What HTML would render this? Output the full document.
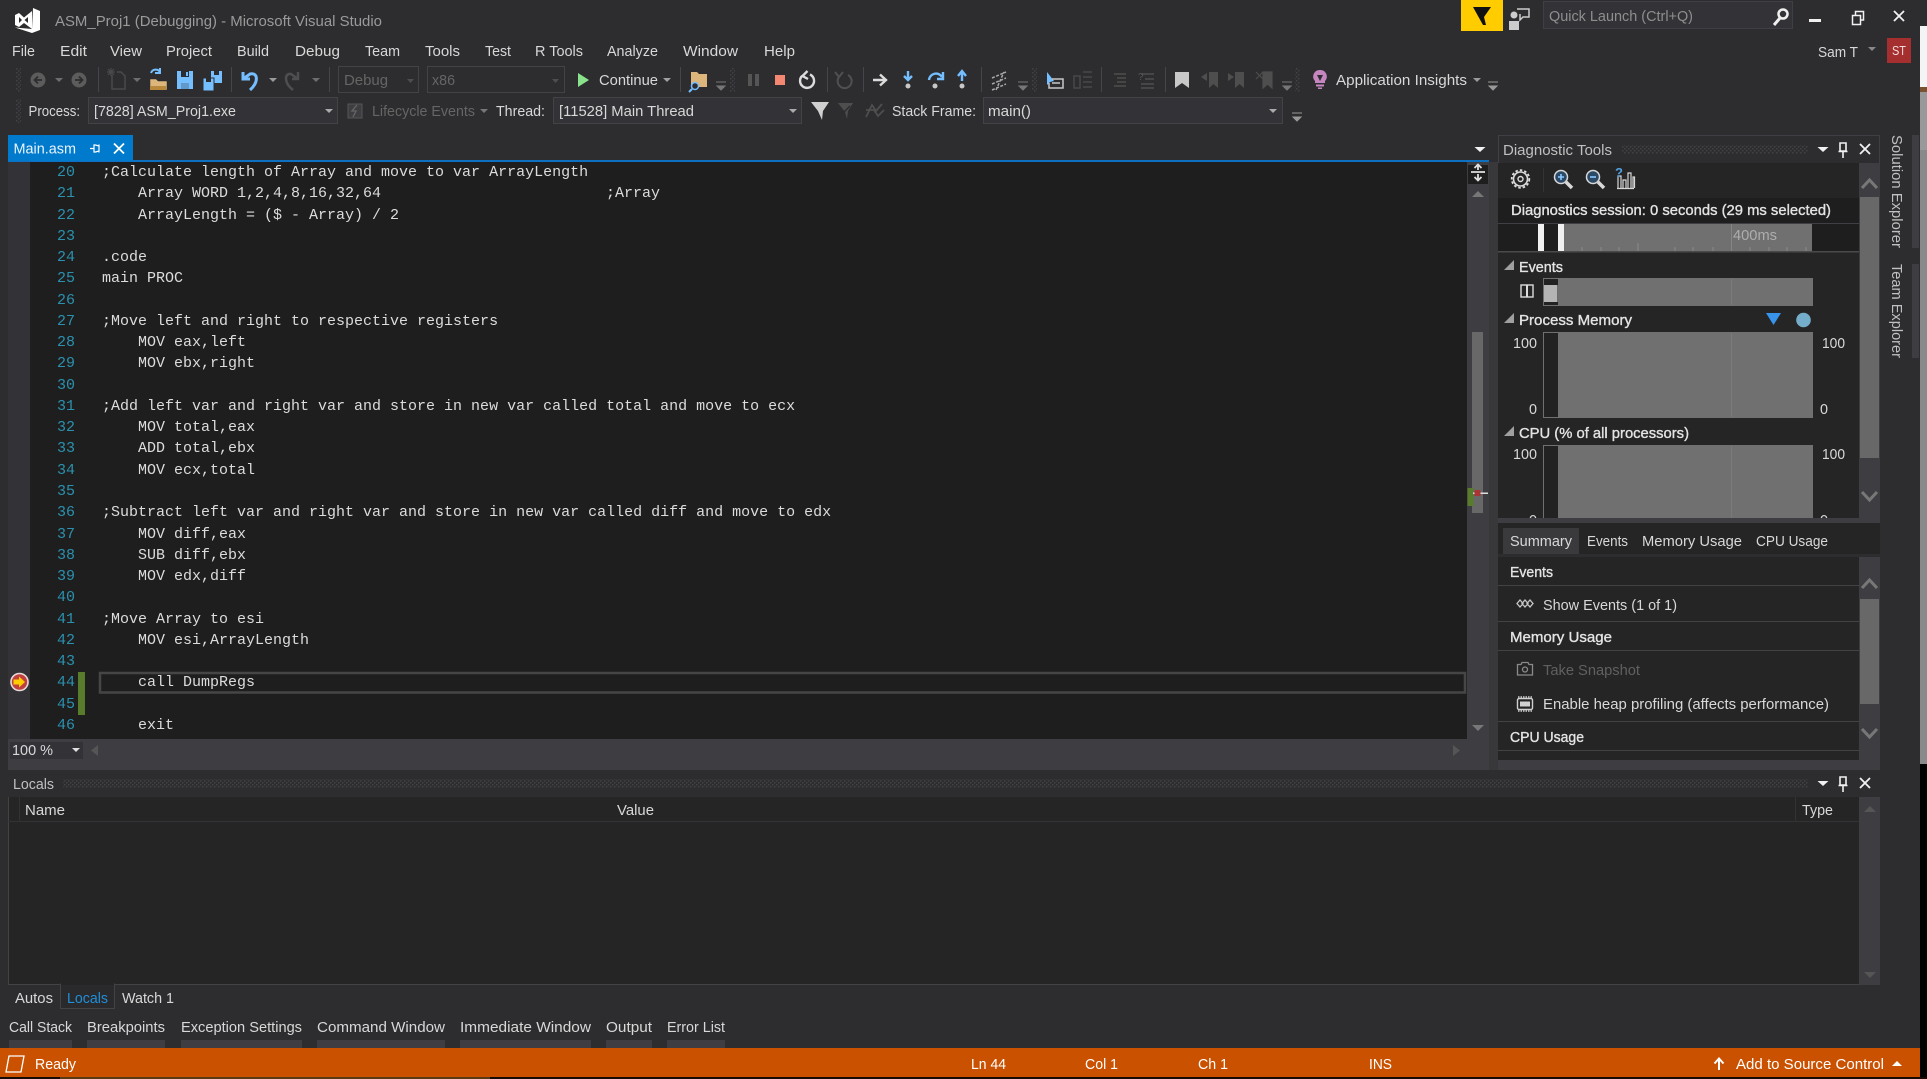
<!DOCTYPE html>
<html><head><meta charset="utf-8"><title>ASM_Proj1 (Debugging) - Microsoft Visual Studio</title>
<style>
html,body{margin:0;padding:0;background:#000;width:1927px;height:1079px;overflow:hidden}
svg{display:block}
text{font-family:"Liberation Sans",sans-serif;font-size:15px;fill:#d8d8d8;white-space:pre}
.c{font-family:"Liberation Mono",monospace;font-size:15px;fill:#dcdcdc}
.n{font-family:"Liberation Mono",monospace;font-size:15px;fill:#2b91af}
.d{fill:#7a7a7a}
.b{fill:#e4e4e4;stroke:#e4e4e4;stroke-width:.35px}
</style></head><body>
<svg width="1927" height="1079" viewBox="0 0 1927 1079" xmlns="http://www.w3.org/2000/svg">
<defs>
<pattern id="g" width="4" height="4" patternUnits="userSpaceOnUse"><rect width="4" height="4" fill="#2d2d30"/><rect width="1.500" height="1.500" fill="#424246"/><rect x="2" y="2" width="1.500" height="1.500" fill="#424246"/></pattern>
<clipPath id="cg"><rect x="1498" y="424" width="361" height="94"/></clipPath>
</defs>
<!-- base -->
<rect width="1927" height="1079" fill="#000"/>
<rect width="1920" height="1079" fill="#2d2d30"/>
<rect x="1920" y="26" width="7" height="61" fill="#f4f4f4"/>
<rect x="1920" y="87" width="7" height="5" fill="#7a5230"/>
<rect x="1920" y="92" width="7" height="58" fill="#999"/>
<rect x="1920" y="150" width="7" height="614" fill="#8a8a8a"/>
<rect x="1920" y="0" width="7" height="26" fill="#2d2d30"/>

<!-- VS logo -->
<path d="M33 8 40 11V30L32 33 15 27.500 32 29Z" fill="#fff"/>
<path d="M15 15 19 13 24 17.500 32 11V29L24 23 19 27 15 25ZM19 17V23L22 20ZM28 17 24.500 20 28 23Z" fill="#fff" fill-rule="evenodd"/>
<text x="55" y="26" textLength="327" lengthAdjust="spacingAndGlyphs" style="fill:#9a9a9a">ASM_Proj1 (Debugging) - Microsoft Visual Studio</text>

<!-- menu -->
<g>
<text x="12" y="56" textLength="23" lengthAdjust="spacingAndGlyphs">File</text>
<text x="60" y="56" textLength="27" lengthAdjust="spacingAndGlyphs">Edit</text>
<text x="110" y="56" textLength="32" lengthAdjust="spacingAndGlyphs">View</text>
<text x="166" y="56" textLength="46" lengthAdjust="spacingAndGlyphs">Project</text>
<text x="237" y="56" textLength="32" lengthAdjust="spacingAndGlyphs">Build</text>
<text x="295" y="56" textLength="45" lengthAdjust="spacingAndGlyphs">Debug</text>
<text x="365" y="56" textLength="35" lengthAdjust="spacingAndGlyphs">Team</text>
<text x="425" y="56" textLength="35" lengthAdjust="spacingAndGlyphs">Tools</text>
<text x="485" y="56" textLength="26" lengthAdjust="spacingAndGlyphs">Test</text>
<text x="535" y="56" textLength="48" lengthAdjust="spacingAndGlyphs">R Tools</text>
<text x="607" y="56" textLength="51" lengthAdjust="spacingAndGlyphs">Analyze</text>
<text x="683" y="56" textLength="55" lengthAdjust="spacingAndGlyphs">Window</text>
<text x="764" y="56" textLength="31" lengthAdjust="spacingAndGlyphs">Help</text>
</g>

<!-- top right -->
<rect x="1461" y="0" width="42" height="31" fill="#ffcc00"/>
<path d="M1473 7H1491L1484 17 1486 25H1483Z" fill="#111"/>
<circle cx="1514" cy="15" r="3.500" fill="#ccc"/>
<path d="M1509 30V21H1519V30Z" fill="#ccc"/>
<path d="M1517 9H1529V17H1523L1520 20V14" fill="none" stroke="#ccc" stroke-width="1.500"/>
<rect x="1543.500" y="1.500" width="249" height="27" fill="#333337" stroke="#3f3f46"/>
<text x="1549" y="21" textLength="144" lengthAdjust="spacingAndGlyphs" style="fill:#8e8e8e">Quick Launch (Ctrl+Q)</text>
<circle cx="1783" cy="14" r="4.500" fill="none" stroke="#f0f0f0" stroke-width="2.500"/>
<path d="M1780 18 1774 25" stroke="#f0f0f0" stroke-width="3"/>
<rect x="1809" y="19" width="12" height="3" fill="#f1f1f1"/>
<path d="M1852.500 15.500H1860.500V24.500H1852.500ZM1855.500 15V11.500H1863.500V20H1861" fill="none" stroke="#f1f1f1" stroke-width="1.500"/>
<path d="M1894 11 1904 21M1904 11 1894 21" stroke="#f1f1f1" stroke-width="1.800"/>
<text x="1818" y="57" textLength="40" lengthAdjust="spacingAndGlyphs">Sam T</text>
<path d="M1868 47H1876L1872 51Z" fill="#888"/>
<rect x="1887" y="38" width="24" height="25" fill="#a52e2e"/>
<text x="1892" y="55" textLength="14" lengthAdjust="spacingAndGlyphs" style="font-size:13px;fill:#f0dcdc">ST</text>

<!-- toolbar 1 -->
<rect x="16" y="68" width="5" height="24" fill="url(#g)"/>
<circle cx="38" cy="80" r="7.500" fill="#5c5c5c"/><path d="M42 80H35M38 76.500 34.500 80 38 83.500" fill="none" stroke="#2d2d30" stroke-width="1.800"/>
<path d="M55 78H63L59 82Z" fill="#6e6e6e"/>
<circle cx="79" cy="80" r="7.500" fill="#5c5c5c"/><path d="M75 80H82M79 76.500 82.500 80 79 83.500" fill="none" stroke="#2d2d30" stroke-width="1.800"/>
<rect x="98" y="67" width="1" height="25" fill="#46464a"/>
<path d="M112 75V89H125V76L121 72H117" fill="none" stroke="#4a4a4a" stroke-width="1.500"/><path d="M111 68V76M107 72H115M108 69 114 75M114 69 108 75" stroke="#4a4a4a" stroke-width="1.200"/>
<path d="M133 78H141L137 82Z" fill="#6e6e6e"/>
<path d="M150 79H156L158 81H167V90H150Z" fill="#dcb67a" stroke="#2d2d30" stroke-width=".5"/><path d="M150 86H166V90H150Z" fill="#b8893c"/>
<path d="M151 73A5 5 0 0 1 160 72M160 68V73H155" fill="none" stroke="#75beff" stroke-width="2"/>
<path d="M177 71H193V89H177Z" fill="#75beff"/><rect x="181" y="71" width="8" height="6" fill="#2d2d30"/><rect x="186" y="72" width="2" height="4" fill="#75beff"/><rect x="181" y="83" width="8" height="6" fill="#2d2d30" opacity=".25"/>
<path d="M211 71H222V83H211Z" fill="#75beff"/><rect x="214" y="71" width="5" height="4" fill="#2d2d30"/>
<path d="M203 78H214V91H203Z" fill="#75beff" stroke="#2d2d30"/><rect x="206" y="78" width="5" height="4" fill="#2d2d30"/>
<rect x="231" y="67" width="1" height="25" fill="#46464a"/>
<path d="M243 72V79H250M243 79 250 74C258 72 259 82 250 90" fill="none" stroke="#75beff" stroke-width="3"/>
<path d="M269 78H277L273 82Z" fill="#9a9a9a"/>
<path d="M298 72V79H292M298 79 291 74C284 73 284 83 293 90" fill="none" stroke="#4e4e4e" stroke-width="2.500"/>
<path d="M312 78H320L316 82Z" fill="#6e6e6e"/>
<rect x="329" y="67" width="1" height="25" fill="#46464a"/>
<rect x="338.500" y="66.500" width="80" height="26" fill="none" stroke="#434346"/>
<text x="344" y="85" textLength="44" lengthAdjust="spacingAndGlyphs" style="fill:#656565">Debug</text>
<path d="M407 79H414L410.500 83Z" fill="#4e4e4e"/>
<rect x="427.500" y="66.500" width="137" height="26" fill="none" stroke="#434346"/>
<text x="432" y="85" textLength="23" lengthAdjust="spacingAndGlyphs" style="fill:#656565">x86</text>
<path d="M552 79H559L555.500 83Z" fill="#4e4e4e"/>
<path d="M578 73 589 80 578 87Z" fill="#8ae28a"/>
<text x="599" y="85" textLength="59" lengthAdjust="spacingAndGlyphs">Continue</text>
<path d="M663 78H671L667 82Z" fill="#a0a0a0"/>
<rect x="680" y="67" width="1" height="25" fill="#46464a"/>
<path d="M691 72H697L699 74H707V87H691Z" fill="#dcb67a"/><circle cx="695" cy="86" r="3.500" fill="#2d2d30" stroke="#75beff" stroke-width="1.500"/><path d="M692 89 689 92" stroke="#75beff" stroke-width="2"/>
<path d="M716 82H726M717 86H725L721 90Z" stroke="#777" fill="#777"/>
<rect x="730" y="68" width="5" height="24" fill="url(#g)"/>
<rect x="748" y="74" width="4" height="12" fill="#555"/><rect x="755" y="74" width="4" height="12" fill="#555"/>
<rect x="775" y="75" width="10" height="10" fill="#f48771"/>
<path d="M802 76A7 7 0 1 0 810 74.500M807.500 71 802.500 76 808 79" fill="none" stroke="#dcdcdc" stroke-width="2.400"/>
<rect x="827" y="67" width="1" height="25" fill="#46464a"/>
<path d="M839 77A7 7 0 1 0 848 75M843 72 839 77 835 72" fill="none" stroke="#505050" stroke-width="2"/>
<rect x="863" y="67" width="1" height="25" fill="#46464a"/>
<path d="M873 80H885M880 74.500 886 80 880 85.500" fill="none" stroke="#dcdcdc" stroke-width="2.400"/>
<path d="M908 71V79M904 76 908 80 912 76" fill="none" stroke="#75beff" stroke-width="2.400"/><circle cx="908" cy="86" r="2.500" fill="#c8c8c8"/>
<path d="M929 80A7 7 0 0 1 942 77M943 72V79H937" fill="none" stroke="#75beff" stroke-width="2.400"/><circle cx="935" cy="86" r="2.500" fill="#c8c8c8"/>
<path d="M962 81V72M958 76 962 71 966 76" fill="none" stroke="#75beff" stroke-width="2.400"/><circle cx="962" cy="86" r="2.500" fill="#c8c8c8"/>
<rect x="981" y="67" width="1" height="25" fill="#46464a"/>
<path d="M992 78 1006 72M992 84 1006 78M992 90 1006 84M996 90 1004 72" stroke="#a8a8a8" stroke-width="1.500" stroke-dasharray="3 1.500" fill="none"/>
<path d="M1018 82H1028M1019 86H1027L1023 90Z" stroke="#777" fill="#777"/>
<rect x="1032" y="68" width="5" height="24" fill="url(#g)"/>
<path d="M1047 72 1047 85 1050 82 1054 81Z" fill="#75beff"/>
<path d="M1052 79H1063V88H1049V83M1052 83H1060" fill="none" stroke="#c8c8c8" stroke-width="1.500"/>
<path d="M1074 76H1080V88H1074ZM1083 72H1092M1083 77H1092M1083 82H1092M1083 87H1092" fill="none" stroke="#484848" stroke-width="1.500"/>
<rect x="1101" y="67" width="1" height="25" fill="#46464a"/>
<path d="M1114 74H1126M1117 78H1126M1117 82H1126M1114 86H1126" stroke="#4e4e4e" stroke-width="1.500"/>
<path d="M1141 74H1154M1145 79H1154M1141 84H1154M1141 88H1154" stroke="#4e4e4e" stroke-width="1.500"/><text x="1138" y="80" style="font-size:10px;fill:#555">?</text>
<rect x="1165" y="67" width="1" height="25" fill="#46464a"/>
<path d="M1175 72H1189V88L1182 83 1175 88Z" fill="#c8c8c8"/>
<path d="M1209 72H1218V88L1213.500 84 1209 88ZM1201 77 1207 73V81Z" fill="#4e4e4e"/>
<path d="M1235 72H1244V88L1239.500 84 1235 88ZM1234 77 1228 73V81Z" fill="#4e4e4e"/>
<path d="M1263 72H1272V88L1267.500 84 1263 88ZM1256 72 1263 79M1263 72 1256 79" fill="#4e4e4e" stroke="#4e4e4e" stroke-width="1.200"/>
<path d="M1282 82H1292M1283 86H1291L1287 90Z" stroke="#777" fill="#777"/>
<rect x="1295" y="68" width="5" height="24" fill="url(#g)"/>
<path d="M1320 70A6.500 6.500 0 0 1 1325 81V83H1315V81A6.500 6.500 0 0 1 1320 70Z" fill="#c586c0"/><path d="M1317 75H1323L1320 81Z" fill="#2d2d30"/><rect x="1316" y="84.500" width="8" height="2" fill="#c586c0"/><rect x="1318" y="87.500" width="4" height="1.500" fill="#c586c0"/>
<text x="1336" y="85" textLength="131" lengthAdjust="spacingAndGlyphs">Application Insights</text>
<path d="M1473 78H1481L1477 82Z" fill="#9a9a9a"/>
<path d="M1488 82H1498M1489 86H1497L1493 90Z" stroke="#999" fill="#999"/>

<!-- toolbar 2 -->
<rect x="16" y="99" width="5" height="24" fill="url(#g)"/>
<text x="28.500" y="116" textLength="51.500" lengthAdjust="spacingAndGlyphs">Process:</text>
<rect x="88.500" y="97.500" width="249" height="26" fill="#333337" stroke="#434346"/>
<text x="94" y="116" textLength="142" lengthAdjust="spacingAndGlyphs">[7828] ASM_Proj1.exe</text>
<path d="M325 109H333L329 113Z" fill="#aaa"/>
<rect x="348" y="104" width="14" height="14" fill="#3e3e42" stroke="#555"/><path d="M357 105 352 111H356L353 117" fill="none" stroke="#666" stroke-width="1.300"/>
<text x="372" y="116" textLength="103" lengthAdjust="spacingAndGlyphs" style="fill:#656565">Lifecycle Events</text>
<path d="M480 109H488L484 113Z" fill="#777"/>
<text x="496" y="116" textLength="49" lengthAdjust="spacingAndGlyphs">Thread:</text>
<rect x="553.500" y="97.500" width="248" height="26" fill="#333337" stroke="#434346"/>
<text x="559" y="116" textLength="135" lengthAdjust="spacingAndGlyphs">[11528] Main Thread</text>
<path d="M789 109H797L793 113Z" fill="#aaa"/>
<path d="M811 102H829L823 111 822 120 818 111Z" fill="#d0d0d0"/>
<path d="M838 103H853L848 111 847 119 845 112Z" fill="#4e4e4e"/><path d="M850 106 842 114" stroke="#2d2d30" stroke-width="1.500"/>
<path d="M866 117 872 105 876 111 882 104M866 110 874 110 878 116 884 110" fill="none" stroke="#4e4e4e" stroke-width="1.800"/>
<text x="892" y="116" textLength="84" lengthAdjust="spacingAndGlyphs">Stack Frame:</text>
<rect x="983.500" y="97.500" width="299" height="26" fill="#333337" stroke="#434346"/>
<text x="988" y="116" textLength="43" lengthAdjust="spacingAndGlyphs">main()</text>
<path d="M1269 109H1277L1273 113Z" fill="#aaa"/>
<path d="M1292 113H1302M1293 117H1301L1297 121Z" stroke="#999" fill="#999"/>

<!-- tab strip -->
<rect x="8" y="160" width="1481" height="2.500" fill="#0e70c0"/>
<rect x="8" y="135" width="125" height="26" fill="#007acc"/>
<text x="13.500" y="153.500" textLength="62.500" lengthAdjust="spacingAndGlyphs" style="fill:#eaf4fb">Main.asm</text>
<path d="M90 148.500H94M94 145V152H95.500L99 151V146L95.500 145ZM99 144.500V152.500" fill="none" stroke="#fff" stroke-width="1.200"/>
<path d="M114 143.500 124 153.500M124 143.500 114 153.500" stroke="#fff" stroke-width="1.800"/>
<path d="M1474.500 147H1485.500L1480 152Z" fill="#f1f1f1"/>

<!-- editor -->
<rect x="8" y="162" width="22" height="577" fill="#333337"/>
<rect x="30" y="162" width="1437" height="577" fill="#1e1e1e"/>
<rect x="78" y="672" width="7" height="43" fill="#587c2c"/>
<rect x="100" y="673" width="1365" height="19.500" fill="none" stroke="#464646" stroke-width="2.500"/>
<g class="ln">
<text class="n" x="57" y="176">20</text><text class="n" x="57" y="197">21</text><text class="n" x="57" y="219">22</text><text class="n" x="57" y="240">23</text><text class="n" x="57" y="261">24</text><text class="n" x="57" y="282">25</text><text class="n" x="57" y="304">26</text><text class="n" x="57" y="325">27</text><text class="n" x="57" y="346">28</text><text class="n" x="57" y="367">29</text><text class="n" x="57" y="389">30</text><text class="n" x="57" y="410">31</text><text class="n" x="57" y="431">32</text><text class="n" x="57" y="452">33</text><text class="n" x="57" y="474">34</text><text class="n" x="57" y="495">35</text><text class="n" x="57" y="516">36</text><text class="n" x="57" y="538">37</text><text class="n" x="57" y="559">38</text><text class="n" x="57" y="580">39</text><text class="n" x="57" y="601">40</text><text class="n" x="57" y="623">41</text><text class="n" x="57" y="644">42</text><text class="n" x="57" y="665">43</text><text class="n" x="57" y="686">44</text><text class="n" x="57" y="708">45</text><text class="n" x="57" y="729">46</text>
</g>
<text class="c" x="102" y="176">;Calculate length of Array and move to var ArrayLength</text>
<text class="c" x="138" y="197">Array WORD 1,2,4,8,16,32,64</text><text class="c" x="606" y="197">;Array</text>
<text class="c" x="138" y="219">ArrayLength = ($ - Array) / 2</text>
<text class="c" x="102" y="261">.code</text>
<text class="c" x="102" y="282">main PROC</text>
<text class="c" x="102" y="325">;Move left and right to respective registers</text>
<text class="c" x="138" y="346">MOV eax,left</text>
<text class="c" x="138" y="367">MOV ebx,right</text>
<text class="c" x="102" y="410">;Add left var and right var and store in new var called total and move to ecx</text>
<text class="c" x="138" y="431">MOV total,eax</text>
<text class="c" x="138" y="452">ADD total,ebx</text>
<text class="c" x="138" y="474">MOV ecx,total</text>
<text class="c" x="102" y="516">;Subtract left var and right var and store in new var called diff and move to edx</text>
<text class="c" x="138" y="538">MOV diff,eax</text>
<text class="c" x="138" y="559">SUB diff,ebx</text>
<text class="c" x="138" y="580">MOV edx,diff</text>
<text class="c" x="102" y="623">;Move Array to esi</text>
<text class="c" x="138" y="644">MOV esi,ArrayLength</text>
<text class="c" x="138" y="686">call DumpRegs</text>
<text class="c" x="138" y="729">exit</text>
<!-- breakpoint -->
<circle cx="19.500" cy="682" r="8.500" fill="#c04040" stroke="#e8d8d8" stroke-width="1.600"/>
<path d="M13.500 679.500H19V676.500L25 682 19 687.500V684.500H13.500Z" fill="#ffcc00"/>

<!-- editor scrollbar -->
<rect x="1467" y="162" width="22" height="577" fill="#3e3e42"/>
<rect x="1468" y="165" width="20" height="19" fill="#1e1e1e"/>
<path d="M1471 172H1485M1478 165V170M1474.500 168 1478 164.500 1481.500 168M1478 174V180M1474.500 177 1478 180.500 1481.500 177" fill="none" stroke="#e0e0e0" stroke-width="1.800"/>
<path d="M1472 197H1484L1478 191Z" fill="#777"/>
<rect x="1472" y="332" width="11" height="181" fill="#686868"/>
<rect x="1467.500" y="488" width="6" height="18" fill="#587c2c"/>
<rect x="1473" y="492.500" width="15" height="1.500" fill="#ddd"/>
<rect x="1474.500" y="490" width="6" height="6" fill="#a33"/>
<path d="M1472 725H1484L1478 731Z" fill="#777"/>
<rect x="1489" y="162" width="9" height="608" fill="#38383b"/>

<!-- zoom bar -->
<rect x="8" y="739" width="1481" height="31" fill="#3e3e42"/>
<rect x="10" y="742" width="73" height="17" fill="#333337"/>
<text x="12" y="755" textLength="41" lengthAdjust="spacingAndGlyphs">100 %</text>
<path d="M72 748H80L76 752Z" fill="#e0e0e0"/>
<path d="M98 745V756L91 750.500Z" fill="#555"/>
<path d="M1453 745V756L1460 750.500Z" fill="#555"/>

<!-- Diagnostic tools -->
<rect x="1498" y="135" width="382" height="635" fill="#2d2d30"/>
<rect x="1498.500" y="135.500" width="381" height="28" fill="none" stroke="#3f3f46"/>
<text x="1503" y="155" textLength="109" lengthAdjust="spacingAndGlyphs" style="fill:#c0c0c0">Diagnostic Tools</text>
<rect x="1622" y="145" width="186" height="9" fill="url(#g)"/>
<path d="M1817.500 147H1828.500L1823 152Z" fill="#f1f1f1"/>
<path d="M1840 143H1846V151H1840ZM1838.500 151.500H1847.500M1843 152V158" fill="none" stroke="#f1f1f1" stroke-width="1.600"/>
<path d="M1860 144 1870 154M1870 144 1860 154" stroke="#f1f1f1" stroke-width="1.800"/>
<rect x="1498" y="163" width="361" height="355" fill="#252526"/>
<circle cx="1520.500" cy="179" r="7" fill="none" stroke="#dcdcdc" stroke-width="1.600"/>
<circle cx="1520.500" cy="179" r="8.800" fill="none" stroke="#dcdcdc" stroke-width="1.800" stroke-dasharray="2.500 2"/>
<circle cx="1520.500" cy="179" r="2.500" fill="none" stroke="#dcdcdc" stroke-width="1.400"/>
<rect x="1543" y="168" width="1" height="24" fill="#333"/>
<circle cx="1561" cy="177" r="6.500" fill="#2b4a68" stroke="#d8d8d8" stroke-width="1.500"/><path d="M1566 182 1572 188" stroke="#d8d8d8" stroke-width="3.500"/><path d="M1558 177H1564M1561 174V180" stroke="#8cc8ff" stroke-width="1.600"/>
<circle cx="1593" cy="177" r="6.500" fill="#2b4a68" stroke="#d8d8d8" stroke-width="1.500"/><path d="M1598 182 1604 188" stroke="#d8d8d8" stroke-width="3.500"/><path d="M1590 177H1596" stroke="#8cc8ff" stroke-width="1.600"/>
<path d="M1618 188V176H1621V188M1623 188V180H1626V188M1628 188V173H1631V188M1633 188V177H1634.500V188M1617 188.500H1634" fill="none" stroke="#d8d8d8" stroke-width="1.200"/>
<text x="1615" y="177" style="font-size:13px;font-weight:bold;fill:#4ea0e0">?</text>

<rect x="1498" y="198" width="361" height="25" fill="#1e1e1e"/>
<text class="b" x="1511" y="215" textLength="320" lengthAdjust="spacingAndGlyphs">Diagnostics session: 0 seconds (29 ms selected)</text>
<rect x="1498" y="223" width="361" height="1" fill="#3f3f46"/>
<rect x="1498" y="224" width="361" height="27" fill="#1e1e1e"/>
<rect x="1564" y="224" width="248" height="27" fill="#707070"/>
<rect x="1538" y="224" width="6" height="27" fill="#f0f0f0"/>
<rect x="1558" y="224" width="6" height="27" fill="#f0f0f0"/>
<rect x="1731" y="224" width="1" height="27" fill="#858585"/>
<text x="1733" y="240" textLength="44" lengthAdjust="spacingAndGlyphs" style="fill:#adadad">400ms</text>
<path d="M1582 251V247M1601 251V247M1619 251V247M1638 251V243M1675 251V247M1693 251V247M1713 251V247M1750 251V247M1769 251V247M1787 251V247M1806 251V247" stroke="#8a8a8a"/>
<rect x="1498" y="251" width="361" height="1.500" fill="#4a4a4c"/>

<path d="M1514 260V270H1504Z" fill="#a0a0a0"/>
<text class="b" x="1519" y="272" textLength="44" lengthAdjust="spacingAndGlyphs">Events</text>
<rect x="1521" y="285" width="12" height="12" fill="none" stroke="#dcdcdc" stroke-width="1.400"/><rect x="1526" y="285" width="2" height="12" fill="#dcdcdc"/>
<rect x="1543" y="278" width="270" height="28" fill="#707070"/>
<rect x="1544" y="279" width="14" height="26" fill="#222"/>
<rect x="1544" y="285" width="13.500" height="17" fill="#b4b4b4"/>
<rect x="1731" y="279" width="1" height="26" fill="#7a7a7a"/>

<path d="M1514 313V323H1504Z" fill="#a0a0a0"/>
<text class="b" x="1519" y="325" textLength="113" lengthAdjust="spacingAndGlyphs">Process Memory</text>
<path d="M1766 313H1781L1773.500 325Z" fill="#3794ea"/>
<circle cx="1803.500" cy="320" r="7.300" fill="#75aeca"/>
<rect x="1543" y="332" width="270" height="86" fill="#707070"/>
<rect x="1544" y="333" width="14" height="84" fill="#222"/>
<rect x="1731" y="333" width="1" height="84" fill="#7a7a7a"/>
<text x="1513" y="348" textLength="24" lengthAdjust="spacingAndGlyphs">100</text>
<text x="1529" y="414" textLength="8" lengthAdjust="spacingAndGlyphs">0</text>
<text x="1822" y="348" textLength="23" lengthAdjust="spacingAndGlyphs">100</text>
<text x="1820" y="414" textLength="8" lengthAdjust="spacingAndGlyphs">0</text>

<path d="M1514 426V436H1504Z" fill="#a0a0a0"/>
<text class="b" x="1519" y="438" textLength="170" lengthAdjust="spacingAndGlyphs">CPU (% of all processors)</text>
<rect x="1543" y="445" width="270" height="73" fill="#707070"/>
<rect x="1544" y="446" width="14" height="72" fill="#222"/>
<rect x="1731" y="446" width="1" height="72" fill="#7a7a7a"/>
<text x="1513" y="459" textLength="24" lengthAdjust="spacingAndGlyphs">100</text>
<text x="1822" y="459" textLength="23" lengthAdjust="spacingAndGlyphs">100</text>
<g clip-path="url(#cg)"><text x="1529" y="525" textLength="8" lengthAdjust="spacingAndGlyphs">0</text><text x="1820" y="525" textLength="8" lengthAdjust="spacingAndGlyphs">0</text></g>

<rect x="1859" y="163" width="21" height="355" fill="#3e3e42"/>
<path d="M1862 188 1869.500 180 1877 188" fill="none" stroke="#777" stroke-width="3"/>
<rect x="1860" y="197" width="19" height="261" fill="#686868"/>
<path d="M1862 492 1869.500 500 1877 492" fill="none" stroke="#777" stroke-width="3"/>
<rect x="1498" y="518" width="382" height="5" fill="#3e3e42"/>

<!-- summary tabs -->
<rect x="1498" y="523" width="382" height="31" fill="#252526"/>
<rect x="1503" y="528" width="76" height="26" fill="#3a3a3d"/>
<text x="1510" y="546" textLength="62" lengthAdjust="spacingAndGlyphs">Summary</text>
<text x="1587" y="546" textLength="41" lengthAdjust="spacingAndGlyphs">Events</text>
<text x="1642" y="546" textLength="100" lengthAdjust="spacingAndGlyphs">Memory Usage</text>
<text x="1756" y="546" textLength="72" lengthAdjust="spacingAndGlyphs">CPU Usage</text>

<rect x="1498" y="557" width="361" height="203" fill="#252526"/>
<text class="b" x="1510" y="577" textLength="43" lengthAdjust="spacingAndGlyphs">Events</text>
<rect x="1498" y="585" width="361" height="1" fill="#434346"/>
<path d="M1517 603.500 1520 600 1523 603.500 1520 607ZM1522 603.500 1525 600 1528 603.500 1525 607ZM1527 603.500 1530 600 1533 603.500 1530 607Z" fill="none" stroke="#c8c8c8" stroke-width="1.300"/>
<text x="1543" y="610" textLength="134" lengthAdjust="spacingAndGlyphs">Show Events (1 of 1)</text>
<rect x="1498" y="621" width="361" height="1" fill="#434346"/>
<text class="b" x="1510" y="642" textLength="102" lengthAdjust="spacingAndGlyphs">Memory Usage</text>
<rect x="1498" y="650" width="361" height="1" fill="#434346"/>
<path d="M1517.500 664.500H1521L1522 662.500H1528L1529 664.500H1532.500V675H1517.500Z" fill="none" stroke="#8a8a8a" stroke-width="1.300"/><circle cx="1525" cy="669.500" r="2.500" fill="none" stroke="#8a8a8a" stroke-width="1.300"/>
<text x="1543" y="675" textLength="97" lengthAdjust="spacingAndGlyphs" style="fill:#606060">Take Snapshot</text>
<rect x="1517.500" y="698.500" width="15" height="11" rx="1.500" fill="none" stroke="#d0d0d0" stroke-width="1.400"/><rect x="1520" y="701.500" width="10" height="5" fill="#d0d0d0"/>
<path d="M1518 697H1532M1518 711H1532" stroke="#d0d0d0" stroke-width="1.500" stroke-dasharray="1.500 1"/>
<text x="1543" y="709" textLength="286" lengthAdjust="spacingAndGlyphs">Enable heap profiling (affects performance)</text>
<rect x="1498" y="721" width="361" height="1" fill="#434346"/>
<text class="b" x="1510" y="742" textLength="74" lengthAdjust="spacingAndGlyphs">CPU Usage</text>
<rect x="1498" y="750" width="361" height="1" fill="#434346"/>
<rect x="1859" y="557" width="21" height="203" fill="#3e3e42"/>
<path d="M1862 588 1869.500 580 1877 588" fill="none" stroke="#777" stroke-width="3"/>
<rect x="1860" y="599" width="19" height="105" fill="#686868"/>
<path d="M1862 729 1869.500 737 1877 729" fill="none" stroke="#777" stroke-width="3"/>
<rect x="1498" y="760" width="382" height="10" fill="#3e3e42"/>

<!-- right vertical tabs -->
<rect x="1912" y="135" width="7" height="113" fill="#3e3e42"/>
<rect x="1912" y="264" width="7" height="94" fill="#3e3e42"/>
<text transform="translate(1892,135) rotate(90)" textLength="113" lengthAdjust="spacingAndGlyphs" style="fill:#c0c0c0">Solution Explorer</text>
<text transform="translate(1892,264) rotate(90)" textLength="94" lengthAdjust="spacingAndGlyphs" style="fill:#c0c0c0">Team Explorer</text>

<!-- locals -->
<rect x="8" y="770" width="1872" height="27" fill="#2d2d30"/>
<text x="13" y="789" textLength="41" lengthAdjust="spacingAndGlyphs" style="fill:#c0c0c0">Locals</text>
<rect x="63" y="779" width="1745" height="9" fill="url(#g)"/>
<path d="M1817.500 781H1828.500L1823 786Z" fill="#f1f1f1"/>
<path d="M1840 777H1846V785H1840ZM1838.500 785.500H1847.500M1843 786V792" fill="none" stroke="#f1f1f1" stroke-width="1.600"/>
<path d="M1860 778 1870 788M1870 778 1860 788" stroke="#f1f1f1" stroke-width="1.800"/>
<rect x="8" y="797" width="1851" height="187" fill="#252526"/>
<rect x="8" y="984" width="1872" height="1" fill="#434346"/>
<rect x="8" y="797" width="1" height="188" fill="#434346"/>
<rect x="19" y="797" width="1" height="24" fill="#333337"/>
<rect x="8" y="821" width="1851" height="1" fill="#333337"/>
<rect x="1795" y="797" width="1" height="24" fill="#333337"/>
<text x="25" y="815" textLength="40" lengthAdjust="spacingAndGlyphs">Name</text>
<text x="617" y="815" textLength="37" lengthAdjust="spacingAndGlyphs">Value</text>
<text x="1802" y="815" textLength="31" lengthAdjust="spacingAndGlyphs">Type</text>
<rect x="1859" y="797" width="21" height="188" fill="#3e3e42"/>
<path d="M1864 812H1876L1870 806Z" fill="#555"/>
<path d="M1864 972H1876L1870 978Z" fill="#555"/>

<!-- bottom tabs -->
<rect x="60.500" y="984" width="54" height="24.500" fill="#2a2a2d" stroke="#434346"/>
<rect x="61" y="983" width="53" height="2" fill="#252526"/>
<text x="15" y="1003" textLength="38" lengthAdjust="spacingAndGlyphs">Autos</text>
<text x="67" y="1003" textLength="41" lengthAdjust="spacingAndGlyphs" style="fill:#1f8fd8">Locals</text>
<text x="122" y="1003" textLength="52" lengthAdjust="spacingAndGlyphs">Watch 1</text>

<text x="9" y="1032" textLength="63" lengthAdjust="spacingAndGlyphs">Call Stack</text><rect x="9" y="1040" width="63" height="8" fill="#3e3e42"/>
<text x="87" y="1032" textLength="78" lengthAdjust="spacingAndGlyphs">Breakpoints</text><rect x="87" y="1040" width="78" height="8" fill="#3e3e42"/>
<text x="181" y="1032" textLength="121" lengthAdjust="spacingAndGlyphs">Exception Settings</text><rect x="181" y="1040" width="121" height="8" fill="#3e3e42"/>
<text x="317" y="1032" textLength="128" lengthAdjust="spacingAndGlyphs">Command Window</text><rect x="317" y="1040" width="128" height="8" fill="#3e3e42"/>
<text x="460" y="1032" textLength="131" lengthAdjust="spacingAndGlyphs">Immediate Window</text><rect x="460" y="1040" width="131" height="8" fill="#3e3e42"/>
<text x="606" y="1032" textLength="46" lengthAdjust="spacingAndGlyphs">Output</text><rect x="606" y="1040" width="46" height="8" fill="#3e3e42"/>
<text x="667" y="1032" textLength="58" lengthAdjust="spacingAndGlyphs">Error List</text><rect x="667" y="1040" width="58" height="8" fill="#3e3e42"/>

<!-- status bar -->
<rect x="0" y="1048" width="1920" height="29" fill="#ca5100"/>
<rect x="0" y="1077" width="1927" height="2" fill="#150a04"/>
<rect x="60" y="1077" width="430" height="2" fill="#5a3a10"/>
<path d="M9 1056H24L21 1072H6Z" fill="none" stroke="#fff" stroke-width="1.300"/>
<text x="35" y="1069" textLength="41" lengthAdjust="spacingAndGlyphs" style="fill:#fff">Ready</text>
<text x="971" y="1069" textLength="35" lengthAdjust="spacingAndGlyphs" style="fill:#fff">Ln 44</text>
<text x="1085" y="1069" textLength="33" lengthAdjust="spacingAndGlyphs" style="fill:#fff">Col 1</text>
<text x="1198" y="1069" textLength="30" lengthAdjust="spacingAndGlyphs" style="fill:#fff">Ch 1</text>
<text x="1369" y="1069" textLength="23" lengthAdjust="spacingAndGlyphs" style="fill:#fff">INS</text>
<text x="1736" y="1069" textLength="148" lengthAdjust="spacingAndGlyphs" style="fill:#fff">Add to Source Control</text>
<path d="M1719 1070V1059M1714.500 1063.500 1719 1058.500 1723.500 1063.500" fill="none" stroke="#fff" stroke-width="2"/>
<path d="M1892 1066H1902L1897 1061Z" fill="#fff"/>
</svg>
</body></html>
